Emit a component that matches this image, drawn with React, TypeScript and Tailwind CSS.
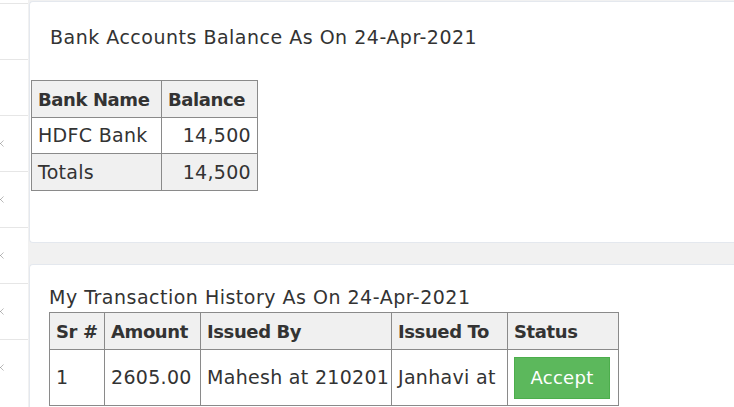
import { X } from "lucide-react"

const font = { fontFamily: '"DejaVu Sans", "Liberation Sans", sans-serif' }

function Sidebar() {
  const rows = [false, false, true, true, true, true, true]
  return (
    <div className="w-[28px] shrink-0 bg-white pt-[3px]">
      {rows.map((hasX, i) => (
        <div key={i} className="h-[56px] border-t border-[#e6e6e6] flex items-center">
          {hasX && <X className="w-[11px] h-[11px] -ml-[5px] text-[#9a9a9a]" strokeWidth={1.5} />}
        </div>
      ))}
    </div>
  )
}

const th = "border border-[#8a8a8a] bg-[#f0f0f0] px-[6px] h-[37px] font-bold text-left whitespace-nowrap text-[18px] tracking-[-0.4px]"
const td = "border border-[#8a8a8a] px-[6px] text-left whitespace-nowrap overflow-hidden"

export default function App() {
  return (
    <div className="w-[734px] h-[407px] overflow-hidden bg-[#f1f1f1] flex text-[#333] text-[19px] tracking-[0.3px]" style={font}>
      <Sidebar />
      <div className="flex-1 flex flex-col gap-[21px] pl-[1px]">
        <div className="h-[242px] shrink-0 mt-[1px] bg-white rounded-tl-[4px] rounded-bl-[4px] border-l border-t border-b border-[#e4e8ee] pt-[22px]">
          <div className="pl-[20px] leading-[26px] tracking-[0.5px]">Bank Accounts Balance As On 24-Apr-2021</div>
          <table className="mt-[30px] ml-[1px] border-collapse table-fixed w-[226px]">
            <colgroup>
              <col className="w-[130px]" />
              <col className="w-[96px]" />
            </colgroup>
            <tbody>
              <tr>
                <th className={th}>Bank Name</th>
                <th className={th}>Balance</th>
              </tr>
              <tr className="h-[36px]">
                <td className={td}>HDFC Bank</td>
                <td className={td + " text-right"}>14,500</td>
              </tr>
              <tr className="h-[37px] bg-[#f0f0f0]">
                <td className={td}>Totals</td>
                <td className={td + " text-right"}>14,500</td>
              </tr>
            </tbody>
          </table>
        </div>
        <div className="flex-1 bg-white rounded-tl-[4px] border-l border-t border-[#e4e8ee] pt-[19px] pl-[19px]">
          <div className="leading-[26px] mb-[2px] tracking-[0.5px]">My Transaction History As On 24-Apr-2021</div>
          <table className="border-collapse table-fixed w-[569px]">
            <colgroup>
              <col className="w-[55px]" />
              <col className="w-[96px]" />
              <col className="w-[191px]" />
              <col className="w-[116px]" />
              <col className="w-[111px]" />
            </colgroup>
            <tbody>
              <tr>
                <th className={th}>Sr #</th>
                <th className={th}>Amount</th>
                <th className={th}>Issued By</th>
                <th className={th}>Issued To</th>
                <th className={th}>Status</th>
              </tr>
              <tr className="h-[56px]">
                <td className={td}>1</td>
                <td className={td}>2605.00</td>
                <td className={td}>Mahesh at 210201</td>
                <td className={td}>Janhavi at</td>
                <td className={td}>
                  <button className="w-[96px] h-[42px] bg-[#5cb85c] border border-[#4cae4c] text-white text-[18px]">Accept</button>
                </td>
              </tr>
            </tbody>
          </table>
        </div>
      </div>
    </div>
  )
}
